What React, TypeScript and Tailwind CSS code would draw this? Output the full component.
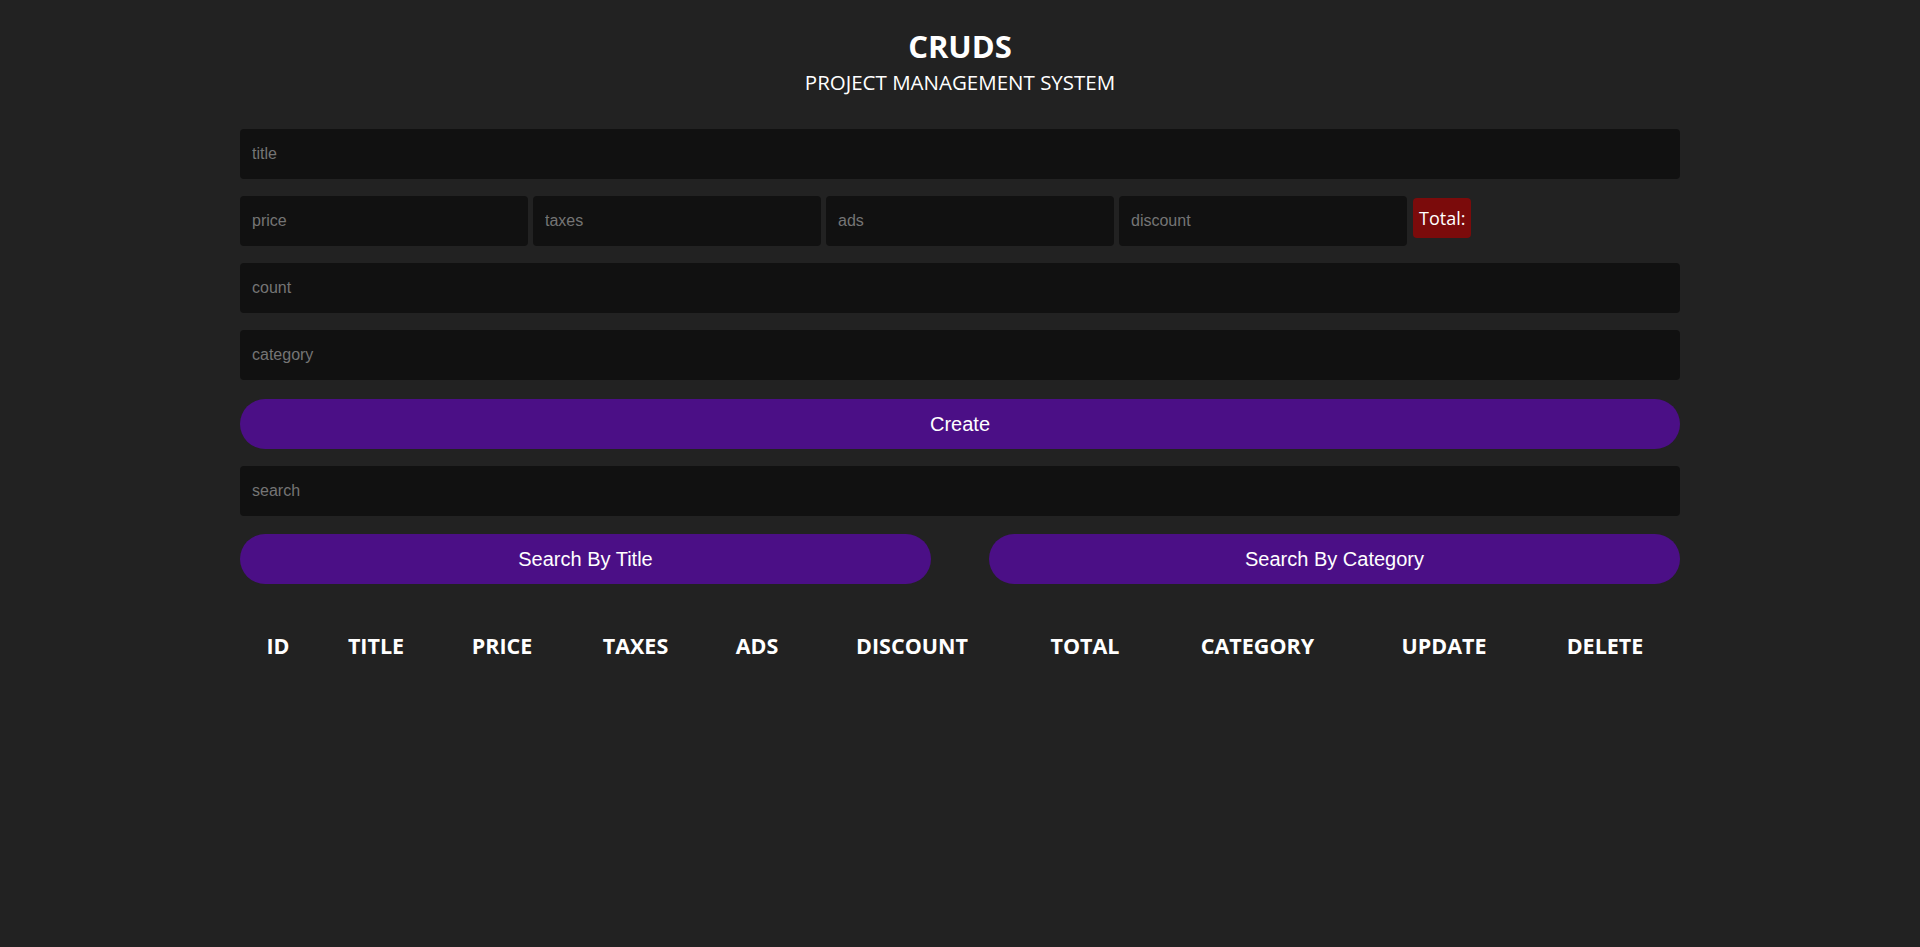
const inputCls =
  "h-[50px] rounded-[4px] bg-[#111111] px-3 text-[16px] text-white placeholder:text-[#757575] outline-none";

const cols: [string, string][] = [
  ["ID", "w-[76px]"],
  ["TITLE", "w-[120px]"],
  ["PRICE", "w-[132px]"],
  ["TAXES", "w-[135px]"],
  ["ADS", "w-[108px]"],
  ["DISCOUNT", "w-[202px]"],
  ["TOTAL", "w-[144px]"],
  ["CATEGORY", "w-[201px]"],
  ["UPDATE", "w-[172px]"],
  ["DELETE", "w-[150px]"],
];

export default function App() {
  return (
    <div className="min-h-[947px] bg-[#222222] text-white font-['Open_Sans',sans-serif]">
      <div className="mx-auto w-[1440px]">
        {/* Head */}
        <div className="pt-[26px] text-center">
          <h2 className="text-[31px] font-bold leading-[40px]">CRUDS</h2>
          <p className="mt-[4px] text-[20.5px] leading-[24px]">PROJECT MANAGEMENT SYSTEM</p>
        </div>

        {/* Inputs */}
        <div className="mt-[35px] flex flex-col font-['Liberation_Sans',Arial,sans-serif]">
          <input className={inputCls + " w-full"} placeholder="title" />

          <div className="mt-[17px] flex items-start gap-[5px]">
            <input className={inputCls + " w-[288px]"} placeholder="price" />
            <input className={inputCls + " w-[288px]"} placeholder="taxes" />
            <input className={inputCls + " w-[288px]"} placeholder="ads" />
            <input className={inputCls + " w-[288px]"} placeholder="discount" />
            <div className="ml-[1px] mt-[2px] flex h-[40px] items-center rounded-[4px] bg-[#7b0b0b] px-[6px] font-['Open_Sans',sans-serif] text-[18px]">
              Total:
            </div>
          </div>

          <input className={inputCls + " mt-[17px] w-full"} placeholder="count" />
          <input className={inputCls + " mt-[17px] w-full"} placeholder="category" />

          <button className="mt-[19px] h-[50px] w-full rounded-full bg-[#4b0f86] text-[20px]">
            Create
          </button>

          <input className={inputCls + " mt-[17px] w-full"} placeholder="search" />

          <div className="mt-[18px] flex justify-between">
            <button className="h-[50px] w-[691px] rounded-full bg-[#4b0f86] text-[20px]">
              Search By Title
            </button>
            <button className="h-[50px] w-[691px] rounded-full bg-[#4b0f86] text-[20px]">
              Search By Category
            </button>
          </div>
        </div>

        {/* Table */}
        <table className="mt-[44px] w-full table-fixed">
          <thead>
            <tr>
              {cols.map(([label, w]) => (
                <th key={label} className={w + " h-[36px] text-center text-[21.5px] font-bold"}>
                  {label}
                </th>
              ))}
            </tr>
          </thead>
          <tbody></tbody>
        </table>
      </div>
    </div>
  );
}
